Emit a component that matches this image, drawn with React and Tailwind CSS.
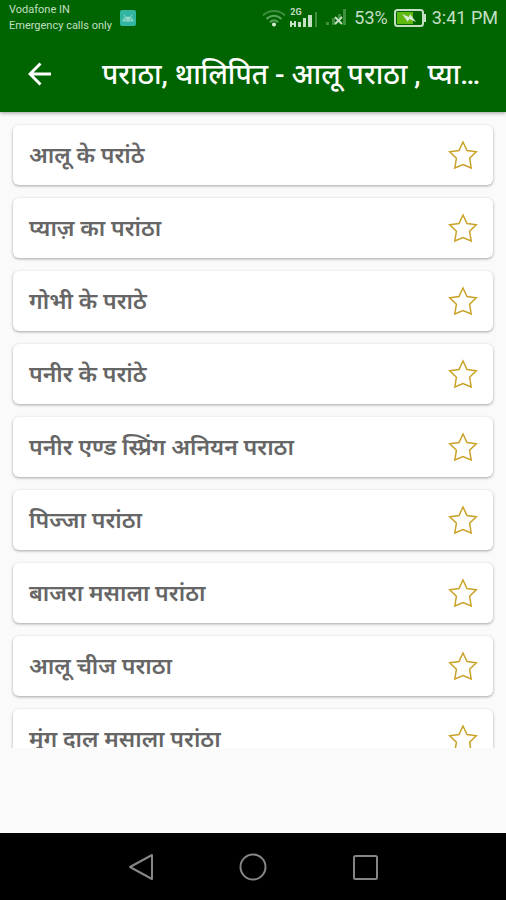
import React from 'react';

const recipes = [
    'आलू के परांठे',
    'प्याज़ का परांठा',
    'गोभी के पराठे',
    'पनीर के परांठे',
    'पनीर एण्ड स्प्रिंग अनियन पराठा',
    'पिज्जा परांठा',
    'बाजरा मसाला परांठा',
    'आलू चीज पराठा',
    'मूंग दाल मसाला परांठा',
];

const WifiIcon = () => (
    <svg width="24" height="18" viewBox="0 0 24 18" fill="none" strokeWidth="2">
        <path d="M1 6.5C7 .5 17 .5 23 6.5" stroke="#3f8f3f" />
        <path d="M4.500 10C9 5.500 15 5.500 19.500 10" stroke="#5ba35b" />
        <path d="M8 13.200C10.500 10.800 13.500 10.800 16 13.200" stroke="#5ba35b" />
        <circle cx="12" cy="15.500" r="2" fill="#d9ecd9" />
    </svg>
);

const SignalIcon = () => (
    <svg width="28" height="16" viewBox="0 0 28 16">
        <g fill="#c4dfc4">
            <path d="M0 9h2v2h2V9h2v6H4v-2H2v2H0z" />
            <rect x="8" y="10" width="3" height="5" />
            <rect x="13" y="6" width="3" height="9" />
            <rect x="18" y="3" width="4" height="12" />
        </g>
        <rect x="25" y="0" width="2" height="15" fill="#3f8f3f" />
    </svg>
);

const NoSimIcon = () => (
    <svg width="20" height="18" viewBox="0 0 20 18">
        <g fill="#3f8f3f">
            <rect x="0" y="13" width="3" height="3" />
            <rect x="6" y="9" width="3" height="7" />
            <rect x="12" y="5" width="3" height="4" />
            <rect x="17" y="0" width="3" height="16" />
        </g>
        <path d="M9 8l7 7M16 8l-7 7" stroke="#c4dfc4" strokeWidth="2" />
    </svg>
);

const BatteryIcon = () => (
    <svg width="32" height="18" viewBox="0 0 32 18">
        <rect x="1" y="1" width="28" height="16" rx="2.500" fill="none" stroke="#c4dfc4" strokeWidth="2" />
        <rect x="30" y="5" width="2" height="8" fill="#c4dfc4" />
        <rect x="3" y="3" width="16" height="12" fill="#5fb80f" />
        <path d="M8 5l7 3 1-3 6 8-7-3-1 3z" fill="#d9ecd9" />
    </svg>
);

const AndroidBadge = () => (
    <svg width="16" height="16" viewBox="0 0 16 16">
        <rect width="16" height="16" rx="2" fill="#2fb5a0" />
        <path d="M2.500 11.500a5.500 5 0 0 1 11 0z" fill="#8ed6c8" />
        <path d="M4 4.500l1.500 2.500M12 4.500L10.500 7" stroke="#8ed6c8" />
        <circle cx="5.500" cy="9.500" r=".8" fill="#2fb5a0" />
        <circle cx="10.500" cy="9.500" r=".8" fill="#2fb5a0" />
    </svg>
);

const StatusBar = () => (
    <div className="flex h-[36px] items-center justify-between pl-[9px] pr-2 text-[#c4dfc4]">
        <div className="flex items-center gap-2">
            <div className="text-[11px] leading-[16px]">
                <div>Vodafone IN</div>
                <div>Emergency calls only</div>
            </div>
            <AndroidBadge />
        </div>
        <div className="flex items-center text-lg leading-[24px]">
            <WifiIcon />
            <div className="ml-1 flex flex-col">
                <span className="text-[9px] font-bold leading-[8px]">2G</span>
                <span className="-mt-1">
                    <SignalIcon />
                </span>
            </div>
            <span className="ml-2">
                <NoSimIcon />
            </span>
            <span className="ml-2">53%</span>
            <span className="ml-[6px]">
                <BatteryIcon />
            </span>
            <span className="ml-[6px]">3:41 PM</span>
        </div>
    </div>
);

const RecipeCard = ({ name }) => (
    <li className="flex h-[60px] shrink-0 items-center justify-between rounded-md bg-white pl-4 pr-[15px] shadow-[0_1px_3px_rgba(0,0,0,0.35)]">
        <span className="pt-[2px] text-[23px] font-semibold leading-[32px] text-[#666666]">{name}</span>
        <button aria-label={`Favourite ${name}`}>
            <svg width="30" height="30" viewBox="0 0 30 30" fill="none" stroke="#c9a227" strokeWidth="1.500">
                <path d="M15 2l4 8.500 9.300 1.300-6.700 6.500 1.600 9.700-8.200-3.500L6.800 28l1.600-9.700-6.700-6.500L11 10.500z" />
            </svg>
        </button>
    </li>
);

const NavBar = () => (
    <nav className="flex h-[67px] shrink-0 items-center justify-center gap-[84px] bg-black">
        <button aria-label="Back">
            <svg width="28" height="28" viewBox="0 0 28 28" fill="none" stroke="#868686" strokeWidth="2" strokeLinejoin="round">
                <path d="M25 2v24L3 14z" />
            </svg>
        </button>
        <button aria-label="Home">
            <svg width="28" height="28" viewBox="0 0 28 28" fill="none" stroke="#868686" strokeWidth="2">
                <circle cx="14" cy="14" r="12.500" />
            </svg>
        </button>
        <button aria-label="Recent apps">
            <svg width="28" height="28" viewBox="0 0 28 28" fill="none" stroke="#868686" strokeWidth="2">
                <rect x="3" y="3" width="23" height="23" rx="1.500" />
            </svg>
        </button>
    </nav>
);

export default function App() {
    return (
        <div className="flex h-screen flex-col bg-[#fafafa] font-['Roboto','Noto_Sans',sans-serif]">
            <header className="relative z-10 shrink-0 bg-[#006400] shadow-[0_1px_4px_rgba(0,0,0,0.4)]">
                <StatusBar />
                <div className="flex h-[76px] items-center pl-[28px] text-white">
                    <button aria-label="Go back" className="shrink-0">
                        <svg width="24" height="24" viewBox="0 0 24 24" fill="none" stroke="currentColor" strokeWidth="3">
                            <path d="M23 12H3M12.500 1.500L2 12l10.500 10.500" />
                        </svg>
                    </button>
                    <h1 className="ml-[50px] whitespace-nowrap pt-[2px] text-[28px] font-medium leading-[44px]">
                        पराठा, थालिपित - आलू पराठा , प्या…
                    </h1>
                </div>
            </header>
            <main className="min-h-0 flex-1 overflow-hidden">
                <ul className="flex flex-col gap-[13px] px-[13px] pt-[13px]">
                    {recipes.map((name) => (
                        <RecipeCard key={name} name={name} />
                    ))}
                </ul>
            </main>
            <div className="h-[85px] shrink-0" />
            <NavBar />
        </div>
    );
}
